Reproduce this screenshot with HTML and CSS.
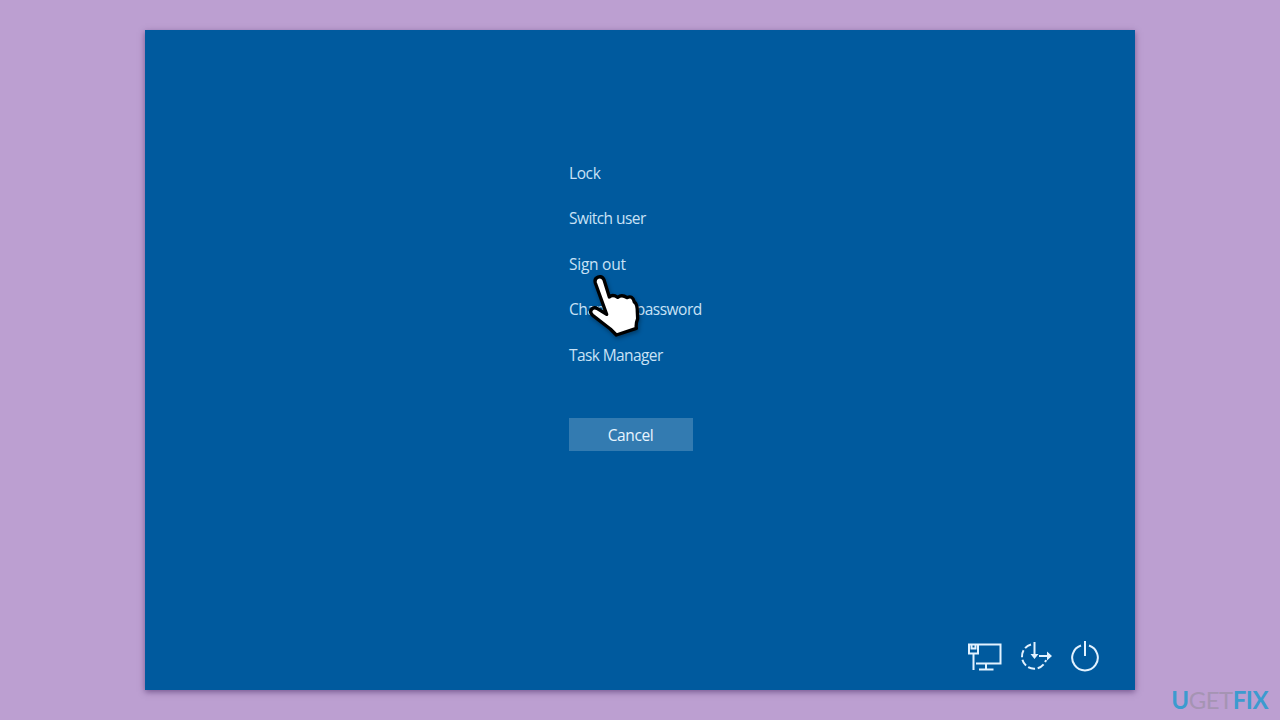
FILE: index.html
```
<!DOCTYPE html>
<html lang="en">
  <head>
    <meta charset="utf-8">
    <meta name="viewport" content="width=device-width, initial-scale=1">
    <title>Security options</title>
    <link rel="stylesheet" href="styles.css">
  </head>
  <body>
    <div class="screen">
      <div class="options">
        <div class="option">Lock</div>
        <div class="option option__switch">Switch user</div>
        <div class="option option__signout">Sign out
          <svg class="hand" width="70" height="76" viewBox="0 0 210 228">
            <path d="M46 42 C41 24 64 16 72 32 L88 84 Q98 75 113 85 Q126 75 141 86 Q158 78 163 99 Q172 104 172 129 L173 149 Q167 164 169 178 L109 198 L91 180 L38 139 C24 126 39 111 52 119 L80 136 Z"/>
          </svg>
        </div>
        <div class="option option__password">Change a password</div>
        <div class="option option__task">Task Manager</div>
        <button class="cancel">Cancel</button>
      </div>
      <div class="tray">
        <svg width="34" height="30" viewBox="0 0 34 30">
          <path d="M11 2.5H32.5V21.5H8M18 21.5V27.5M11 27.5H25.5M5.5 12V28"/>
          <path d="M1 2.5H10V11.5H1ZM3.5 2.5V6.5H7.5V2.5"/>
        </svg>
        <svg width="34" height="30" viewBox="0 0 34 30">
          <path stroke-dasharray="7 2.6" d="M12 2.5A12.3 12.3 0 1 0 27 18"/>
          <path d="M15.5 0V14M20 14H31"/>
          <path class="fill" d="M11.5 12H19.5L15.5 17ZM28 9.5L33 14L28 18.5Z"/>
        </svg>
        <svg width="30" height="32" viewBox="0 0 30 32">
          <path d="M11 4.5A12.8 12.8 0 1 0 19 4.5M15 0V15"/>
        </svg>
      </div>
    </div>
    <div class="brand"><b>U</b>GET<b>FIX</b></div>
  </body>
</html>
```
FILE: styles.css
```
html, body {
  padding: 0px; margin: 0px;
}

body {
  box-sizing: border-box;
  height: 720px;
  padding-top: 30px;
  overflow: hidden;
  position: relative;
  background: #bc9fd1;
  font-family: "Open Sans", "Noto Sans", sans-serif;
}

.screen {
  box-sizing: border-box;
  display: flex;
  flex-direction: column;
  justify-content: space-between;
  width: 990px; height: 660px;
  margin: 0 auto;
  padding: 120px 35px 17px 424px;
  background: #005a9e;
  box-shadow: 0 2px 6px rgba(60, 30, 90, 0.55);
}

.option {
  position: relative;
  height: 45.4px;
  line-height: 47px;
  font-size: 15.5px;
  letter-spacing: -0.4px;
  color: #c9e2f6;
  white-space: nowrap;
}
.option__switch {
  letter-spacing: -0.55px;
}
.option__signout {
  line-height: 46px;
  letter-spacing: -0.25px;
}
.option__password {
  letter-spacing: -0.5px;
}
.option__task {
  line-height: 46px;
  letter-spacing: -0.6px;
}

/* the pointer lies over the next row */
.hand {
  position: absolute;
  z-index: 1;
  left: 11px; top: 28px;
  fill: #fff;
  stroke: #000;
  stroke-width: 10;
  stroke-linejoin: round;
  filter: drop-shadow(1px 2px 2px rgba(0, 0, 0, 0.35));
}

.cancel {
  display: block;
  width: 124px; height: 33px;
  margin-top: 41px; padding: 1px 1px 0 0;
  border: 0;
  background: #337bb1;
  color: #e8f5ff;
  font-family: inherit;
  font-size: 15.5px;
  letter-spacing: -0.4px;
}

.tray {
  display: flex;
  align-items: center;
  justify-content: flex-end;
  gap: 17px;
}
.tray svg {
  fill: none;
  stroke: #e2f2ff;
  stroke-width: 2;
}
.tray .fill {
  fill: #e2f2ff;
  stroke: none;
}

.brand {
  position: absolute;
  right: 12px; bottom: 5px;
  font-family: Lato, sans-serif;
  font-size: 24px;
  line-height: 30px;
  letter-spacing: -0.5px;
  color: #a594b3;
}
.brand b {
  font-weight: bold;
  color: #3c9bcf;
}
```
